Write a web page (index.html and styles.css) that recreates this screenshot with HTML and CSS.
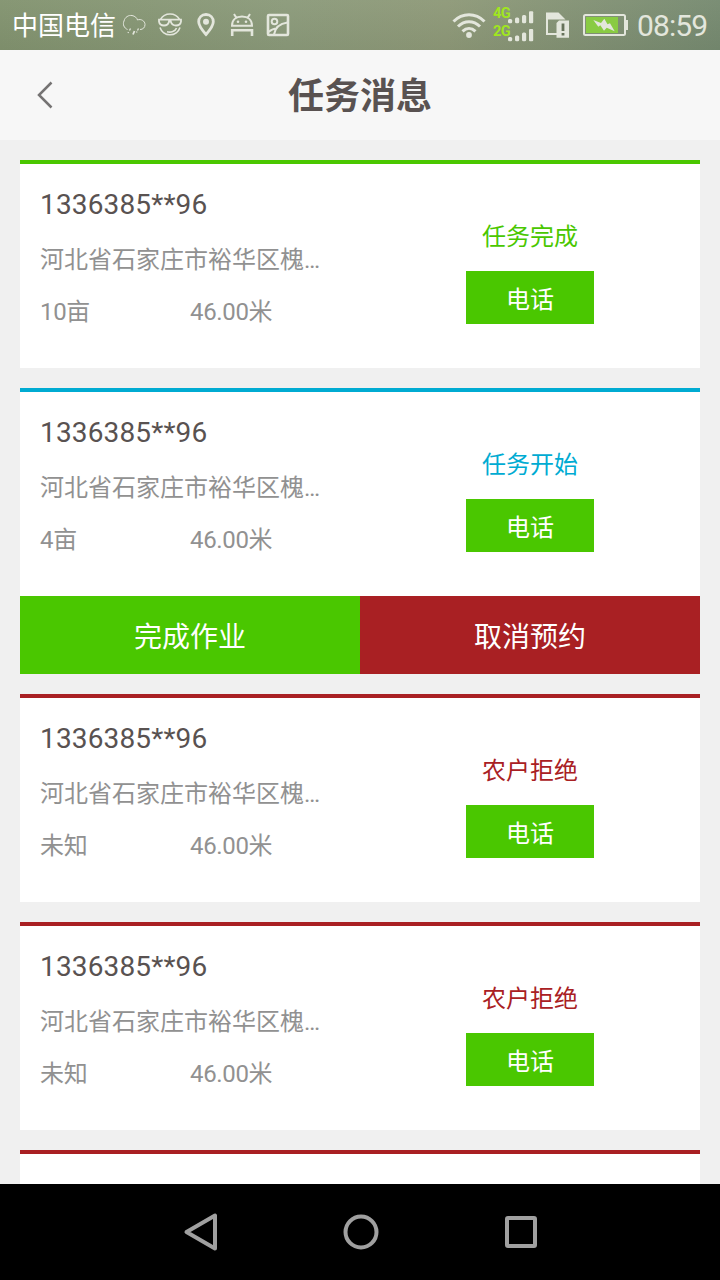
FILE: index.html
```html
<!DOCTYPE html>
<html lang="zh-CN">
<head>
    <meta charset="UTF-8">
    <meta name="viewport" content="width=device-width, initial-scale=1.0">
    <title>任务消息</title>
    <link rel="stylesheet" href="styles.css">
</head>
<body>
    <div class="statusbar">
        <span class="carrier">中国电信</span>
        <svg class="notices" width="170" height="50" viewBox="120 0 170 50" fill="none" stroke="#e3e6dc" stroke-width="2">
            <!-- rain cloud -->
            <g stroke-width="1">
                <path d="M127.500 29.500C124 28 122.500 24.500 124 21C125 17 128.500 15 132 15.500C135 16 137 18 137.500 20C141 18.500 145 21 145 24.500C145 27.500 143 29.500 140 29.500"/>
                <path d="M130.500 28.500l-1 2M138.500 28.500l-1 2M128.500 32l-.5 1M137 31.500l-.5 1" stroke-width="1.300"/>
                <path d="M134.500 31l-1.500 3.500" stroke-width="1.800"/>
            </g>
            <!-- face with sunglasses -->
            <path d="M160.500 19.500A11 11 0 0 1 179.500 19.500M160 27.500A10.500 10.500 0 0 0 180 27.500" stroke-width="1.600"/>
            <path d="M159 19.700H181V21.500C180.500 24.500 178.500 25.500 176 25.500C173 25.500 171.500 24 170.800 21.500H169C168.500 24 167 25.500 164 25.500C161.500 25.500 159.500 24.500 159 21.500Z" stroke-width="1.800"/>
            <path d="M167 31.800C171 33 175.500 31 176.500 28" stroke-width="1.600"/>
            <!-- location pin -->
            <path d="M206 14.500C201.500 14.500 198.700 17.800 198.700 21.800C198.700 26 202 30 206 34.500C210 30 213.300 26 213.300 21.800C213.300 17.800 210.500 14.500 206 14.500Z" stroke-width="2.800"/>
            <circle cx="206" cy="21.800" r="3" fill="#e3e6dc" stroke="none"/>
            <!-- android -->
            <path d="M232 25.700C232 20 236 16.500 242 16.500C248 16.500 252 20 252 25.700ZM236.500 18l-2.500-4M247.500 18l2.500-4"/>
            <circle cx="238" cy="21.800" r="1.300" fill="#e3e6dc" stroke="none"/>
            <circle cx="246" cy="21.800" r="1.300" fill="#e3e6dc" stroke="none"/>
            <path d="M232.200 36V30.200H252V36" stroke-width="2.600"/>
            <!-- picture -->
            <rect x="268" y="15" width="20" height="20" rx="1" stroke-width="2.600"/>
            <circle cx="274.500" cy="21.500" r="2.800"/>
            <path d="M274 34.500C275 28 280 23.500 287.500 22.500M268.500 32C271 30 273 28.500 276.500 28.500"/>
        </svg>
        <svg class="system" width="182" height="50" viewBox="448 0 182 50" fill="none" stroke="#e3e6dc">
            <!-- wifi -->
            <g stroke-width="3">
                <path d="M453.500 21.500C462.500 12.500 475.500 12.500 484.500 21.500"/>
                <path d="M458 26.500C464.500 20 473.500 20 480 26.500"/>
                <path d="M462.500 31.300C466.500 27.500 471.500 27.500 475.500 31.300"/>
            </g>
            <circle cx="469" cy="35" r="2.900" fill="#e3e6dc" stroke="none"/>
            <!-- two sim signals -->
            <g class="network">
                <text x="493" y="18">4G</text>
                <text x="493" y="35.500">2G</text>
            </g>
            <g fill="#e3e6dc" stroke="none">
                <rect x="508" y="19" width="4.200" height="4.200" rx="1.500"/>
                <rect x="515" y="17.500" width="4.200" height="5.700" rx="1.500"/>
                <rect x="522" y="15" width="4.200" height="8.200" rx="1.500"/>
                <rect x="529" y="11.300" width="4.200" height="11.900" rx="1"/>
                <rect x="508" y="37" width="4.200" height="4.200" rx="1.500"/>
                <rect x="515" y="35.500" width="4.200" height="5.700" rx="1.500"/>
                <rect x="522" y="32.500" width="4.200" height="8.700" rx="1.500"/>
                <rect x="529" y="29" width="4.200" height="12.200" rx="1"/>
            </g>
            <!-- sim card alert -->
            <path d="M547 13V34H557" stroke-width="2"/>
            <path d="M546 12.500H558.500L565.500 19.500H546Z" fill="#e3e6dc" stroke="none"/>
            <path d="M559 20.500H569V37.700H556.500V23Z" fill="#e3e6dc" stroke="none"/>
            <path d="M563 23.500V31M563 33V35.500" stroke="#66725a" stroke-width="2.800"/>
            <!-- battery -->
            <rect x="584" y="15" width="41" height="20" rx="1.500" stroke-width="2"/>
            <rect x="586" y="17" width="32" height="16" fill="#89cb43" stroke="none"/>
            <path d="M626.500 20V30" stroke-width="3"/>
            <path d="M593.300 20L601 23L604.300 18.700L607.500 24.300L610 23.300L614.700 31.300L606.700 27.700L604 30.700L600.300 25.300L598.300 26.700Z" fill="#e3e6dc" stroke="none"/>
        </svg>
        <span class="clock">08:59</span>
    </div>

    <div class="header">
        <svg class="back" width="18" height="30" viewBox="0 0 18 30" fill="none" stroke="#757373" stroke-width="2.500">
            <path d="M15.500 2.500L3 15L15.500 27.500"/>
        </svg>
        <h1>任务消息</h1>
    </div>

    <div class="list">
        <div class="card done">
            <div class="card-body">
                <div class="info">
                    <div class="phone">1336385**96</div>
                    <div class="address">河北省石家庄市裕华区槐安东路</div>
                    <div class="meta"><span>10亩</span><span>46.00米</span></div>
                </div>
                <div class="side">
                    <div class="state">任务完成</div>
                    <button class="call">电话</button>
                </div>
            </div>
        </div>

        <div class="card started">
            <div class="card-body">
                <div class="info">
                    <div class="phone">1336385**96</div>
                    <div class="address">河北省石家庄市裕华区槐安东路</div>
                    <div class="meta"><span>4亩</span><span>46.00米</span></div>
                </div>
                <div class="side">
                    <div class="state">任务开始</div>
                    <button class="call">电话</button>
                </div>
            </div>
            <div class="actions">
                <button class="finish">完成作业</button>
                <button class="cancel">取消预约</button>
            </div>
        </div>

        <div class="card refused">
            <div class="card-body">
                <div class="info">
                    <div class="phone">1336385**96</div>
                    <div class="address">河北省石家庄市裕华区槐安东路</div>
                    <div class="meta"><span>未知</span><span>46.00米</span></div>
                </div>
                <div class="side">
                    <div class="state">农户拒绝</div>
                    <button class="call">电话</button>
                </div>
            </div>
        </div>

        <div class="card refused">
            <div class="card-body">
                <div class="info">
                    <div class="phone">1336385**96</div>
                    <div class="address">河北省石家庄市裕华区槐安东路</div>
                    <div class="meta"><span>未知</span><span>46.00米</span></div>
                </div>
                <div class="side">
                    <div class="state">农户拒绝</div>
                    <button class="call">电话</button>
                </div>
            </div>
        </div>

        <div class="card refused">
            <div class="card-body">
                <div class="info">
                    <div class="phone">1336385**96</div>
                </div>
            </div>
        </div>
    </div>

    <div class="navbar">
        <svg width="40" height="40" viewBox="0 0 40 40"><path d="M5.500 20L34 3.500V36.500Z"/></svg>
        <svg width="40" height="40" viewBox="0 0 40 40"><circle cx="20" cy="20" r="15.500"/></svg>
        <svg width="40" height="40" viewBox="0 0 40 40"><rect x="6" y="6" width="28" height="28" rx="1"/></svg>
    </div>
</body>
</html>
```
FILE: styles.css
```css
* {
    box-sizing: border-box;
}
body {
    margin: 0;
    height: 1280px;
    display: flex;
    flex-direction: column;
    overflow: hidden;
    background: #f0f0f0;
    font-family: Roboto, "Noto Sans CJK SC", sans-serif;
}
.statusbar {
    flex: none;
    height: 50px;
    display: flex;
    align-items: center;
    padding-left: 12px;
    background: linear-gradient(to bottom, rgba(255,255,255,0.04), rgba(0,0,0,0.04)), linear-gradient(to right, #82936f, #8b9a7a 40%, #8e9978 62%, #768a70);
}
.carrier {
    width: 108px;
    padding-top: 2px;
    font-size: 26px;
    line-height: 50px;
    color: #fff;
    white-space: nowrap;
}
.system {
    margin-left: 158px;
}
.network {
    fill: #a0e61e;
    stroke: none;
    font-size: 14.5px;
    font-weight: bold;
    letter-spacing: -0.5px;
}
.clock {
    margin-left: 7px;
    padding-top: 2px;
    font-size: 30px;
    line-height: 50px;
    letter-spacing: -0.9px;
    color: #e3e6dc;
}
.header {
    flex: none;
    height: 90px;
    display: grid;
    grid-template-columns: 80px 1fr 80px;
    align-items: center;
    background: #f7f7f7;
}
.back {
    margin-left: 36px;
}
.header h1 {
    margin: 0;
    padding-top: 4px;
    font-size: 36px;
    line-height: 86px;
    text-align: center;
    color: #595251;
}
.list {
    flex: 1;
    min-height: 0;
    overflow: hidden;
    display: flex;
    flex-direction: column;
    gap: 20px;
    padding: 20px 20px 0;
}
.card {
    flex: none;
    background: #fff;
    border-top: 4px solid;
}
.done { color: #4ac700; }
.started { color: #00abd2; }
.refused { color: #a92023; }
.card-body {
    height: 204px;
    display: grid;
    grid-template-columns: repeat(2, minmax(0, 1fr));
}
.info {
    padding: 21px 38px 0 20px;
    color: #919191;
    font-size: 24px;
}
.phone {
    height: 40px;
    line-height: 40px;
    font-size: 28px;
    letter-spacing: 0.15px;
    color: #595251;
}
.address {
    height: 36px;
    line-height: 36px;
    margin-top: 17px;
    overflow: hidden;
    white-space: nowrap;
    text-overflow: ellipsis;
}
.meta {
    display: grid;
    grid-template-columns: 150px 1fr;
    line-height: 36px;
    letter-spacing: -0.35px;
    margin-top: 16px;
}
.side {
    display: flex;
    flex-direction: column;
    align-items: center;
    padding-top: 55px;
}
.state {
    height: 36px;
    line-height: 36px;
    font-size: 24px;
}
button {
    border: none;
    padding: 0;
    font-family: inherit;
    color: #fff;
}
.call {
    width: 128px;
    height: 53px;
    margin-top: 16px;
    font-size: 24px;
    background: #4ac700;
}
.actions {
    display: flex;
    height: 78px;
}
.actions button {
    flex: 1;
    font-size: 28px;
}
.finish { background: #4ac700; }
.cancel { background: #a92023; }
.navbar {
    flex: none;
    height: 96px;
    display: flex;
    justify-content: space-between;
    align-items: center;
    padding: 0 179px 0 181px;
    background: #000;
}
.navbar svg {
    fill: none;
    stroke: #a0a0a0;
    stroke-width: 4;
    stroke-linejoin: round;
}
```
